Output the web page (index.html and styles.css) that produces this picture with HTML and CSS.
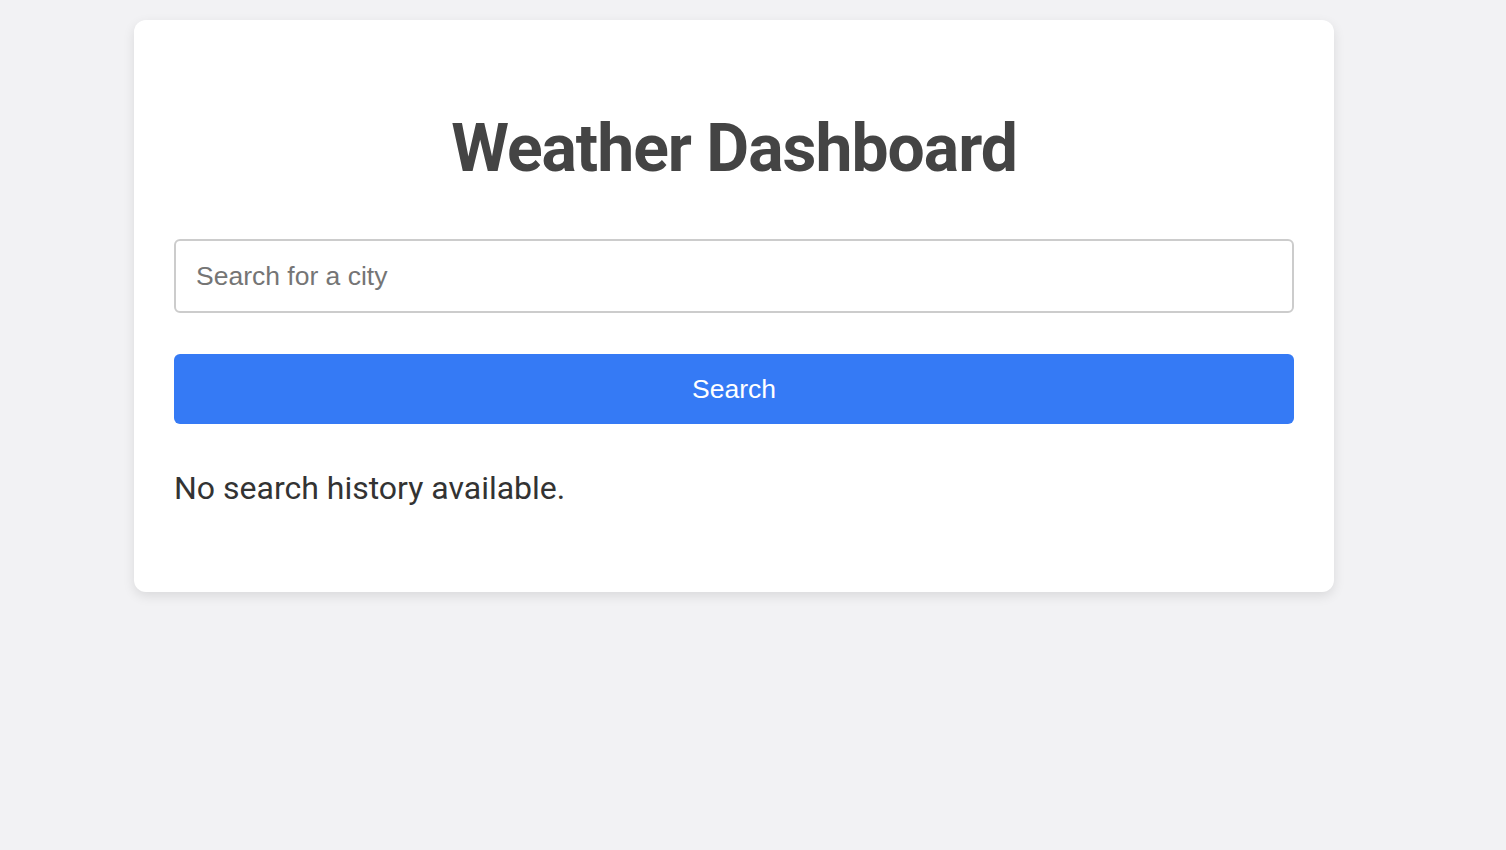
FILE: index.html
```html
<!DOCTYPE html>
<html lang="en">
<head>
<meta charset="utf-8">
<title>Weather Dashboard</title>
<link rel="stylesheet" href="styles.css">
</head>
<body>
<main class="card">
  <h1 class="title">Weather Dashboard</h1>
  <form class="search-form">
    <input class="search-input" type="text" placeholder="Search for a city">
    <button class="search-button" type="button">Search</button>
  </form>
  <section class="history">
    <p class="history-empty">No search history available.</p>
  </section>
</main>
</body>
</html>
```
FILE: styles.css
```css
html, body {
  margin: 0;
  padding: 0;
}
body {
  background: #f2f2f4;
  font-family: Roboto, "Liberation Sans", Arial, sans-serif;
  min-height: 850px;
}
.card {
  box-sizing: border-box;
  width: 1200px;
  margin: 20px 0 0 134px;
  padding: 40px;
  background: #ffffff;
  border-radius: 12px;
  box-shadow: 0 4px 12px rgba(0, 0, 0, 0.1);
}
.title {
  margin: 50px 0 52px;
  font-family: Roboto, sans-serif;
  font-weight: 700;
  font-size: 66px;
  letter-spacing: -1px;
  color: #444444;
  text-align: center;
}
.search-form {
  display: flex;
  flex-direction: column;
  gap: 41px;
}
.search-input {
  box-sizing: border-box;
  width: 100%;
  height: 74px;
  padding: 0 20px;
  border: 2px solid #cccccc;
  border-radius: 6px;
  font-family: "Liberation Sans", Arial, sans-serif;
  font-size: 26.5px;
  color: #333;
  outline: none;
}
.search-input::placeholder {
  color: #757575;
}
.search-button {
  height: 70px;
  border: none;
  border-radius: 6px;
  background: #357af5;
  color: #ffffff;
  font-family: "Liberation Sans", Arial, sans-serif;
  font-size: 26.5px;
  cursor: pointer;
}
.history {
  margin-top: 45px;
}
.history-empty {
  margin: 0 0 45px;
  font-family: Roboto, sans-serif;
  font-size: 32px;
  color: #333333;
}
```
